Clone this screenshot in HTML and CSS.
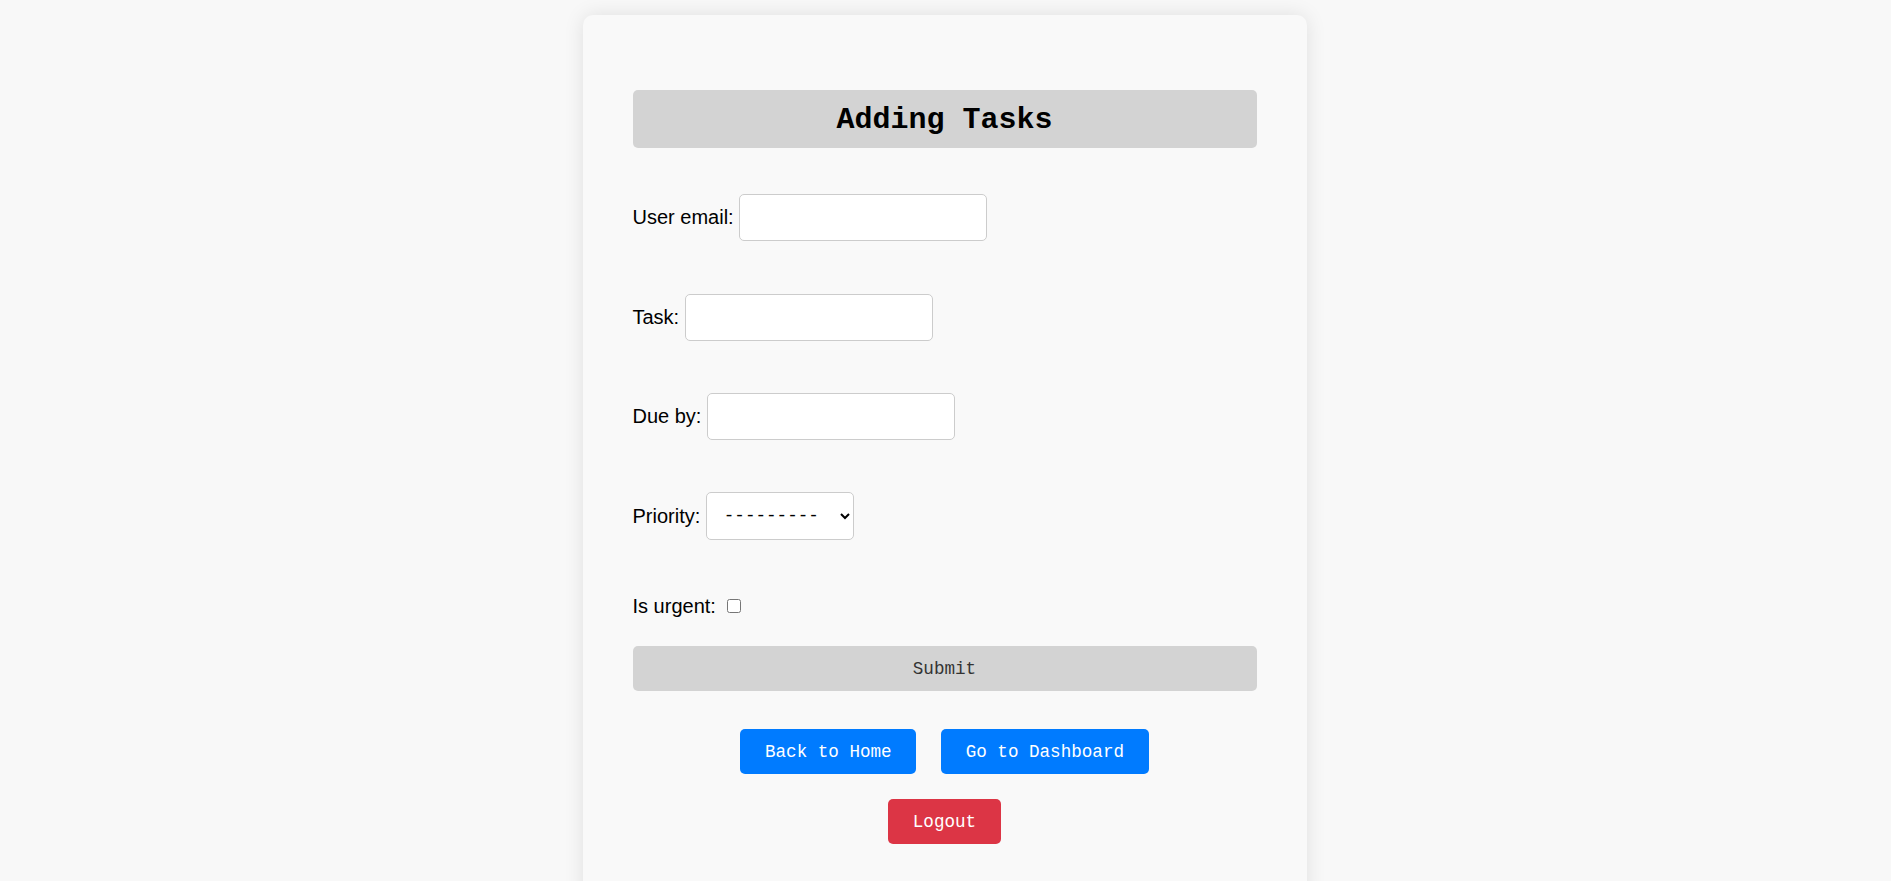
FILE: index.html
```html
<!DOCTYPE html>
<html lang="en">
<head>
<meta charset="utf-8">
<title>Adding Tasks</title>
<link rel="stylesheet" href="styles.css">
</head>
<body>
<div class="card">
  <h1 class="title">Adding Tasks</h1>
  <form class="task-form">
    <div class="row">
      <label class="label" for="email">User email:</label>
      <input class="field" type="email" id="email">
    </div>
    <div class="row">
      <label class="label" for="task">Task:</label>
      <input class="field" type="text" id="task">
    </div>
    <div class="row">
      <label class="label" for="due">Due by:</label>
      <input class="field" type="text" id="due">
    </div>
    <div class="row">
      <label class="label" for="priority">Priority:</label>
      <select class="select" id="priority">
        <option>---------</option>
        <option>Low</option>
        <option>Medium</option>
        <option>High</option>
      </select>
    </div>
    <div class="row row-check">
      <label class="label" for="urgent">Is urgent:</label>
      <input class="check" type="checkbox" id="urgent">
    </div>
    <button class="submit" type="button">Submit</button>
  </form>
  <div class="nav">
    <a class="btn btn-blue" href="#">Back to Home</a>
    <a class="btn btn-blue" href="#">Go to Dashboard</a>
  </div>
  <div class="nav nav-logout">
    <a class="btn btn-red" href="#">Logout</a>
  </div>
</div>
</body>
</html>
```
FILE: styles.css
```css
* {
  box-sizing: border-box;
}

html, body {
  margin: 0;
  padding: 0;
  background: #f8f8f8;
}

body {
  font-family: "Liberation Sans", Arial, sans-serif;
  color: #000;
  padding-right: 2px;
}

.card {
  width: 724px;
  margin: 15px auto 0;
  padding: 75px 50px 60px;
  background: #f9f9f9;
  border-radius: 10px;
  box-shadow: 0 0 20px rgba(0, 0, 0, 0.1);
}

.title {
  margin: 0 0 46px;
  height: 58px;
  display: flex;
  align-items: center;
  justify-content: center;
  background: #d3d3d3;
  border-radius: 5px;
  font-family: "Liberation Mono", "Courier New", monospace;
  font-weight: bold;
  font-size: 30px;
  color: #000;
  padding-top: 1px;
}

.task-form {
  display: flex;
  flex-direction: column;
}

.row {
  display: flex;
  align-items: center;
  height: 47px;
  margin-bottom: 52.5px;
}

.label {
  font-size: 20px;
  margin-right: 5.5px;
  white-space: pre;
}

.field {
  width: 248px;
  height: 47px;
  border: 1px solid #ccc;
  border-radius: 5px;
  background: #fff;
  font-size: 16px;
  padding: 0 10px;
  margin: 0;
}

.select {
  width: 148px;
  height: 48px;
  border: 1px solid #ccc;
  border-radius: 5px;
  background: #fff;
  font-family: "Liberation Mono", "Courier New", monospace;
  font-size: 17.6px;
  color: #000;
  padding: 0 2px 0 13px;
  margin: 0;
}

.row-check {
  height: 28px;
  margin-bottom: 26px;
}

.check {
  width: 14px;
  height: 14px;
  margin: 0 0 0 6px;
}

.submit {
  height: 45px;
  width: 100%;
  border: none;
  border-radius: 5px;
  background: #d3d3d3;
  font-family: "Liberation Mono", "Courier New", monospace;
  font-size: 17.6px;
  color: #333;
  margin: 0 0 38px;
  padding: 0;
}

.nav {
  display: flex;
  justify-content: center;
  gap: 25px;
}

.nav-logout {
  margin-top: 25px;
}

.btn {
  display: inline-flex;
  align-items: center;
  justify-content: center;
  height: 45px;
  padding: 0 24.5px;
  border-radius: 5px;
  font-family: "Liberation Mono", "Courier New", monospace;
  font-size: 17.6px;
  color: #fff;
  text-decoration: none;
}

.btn-blue {
  background: #007bff;
}

.btn-red {
  background: #dc3545;
}
```
